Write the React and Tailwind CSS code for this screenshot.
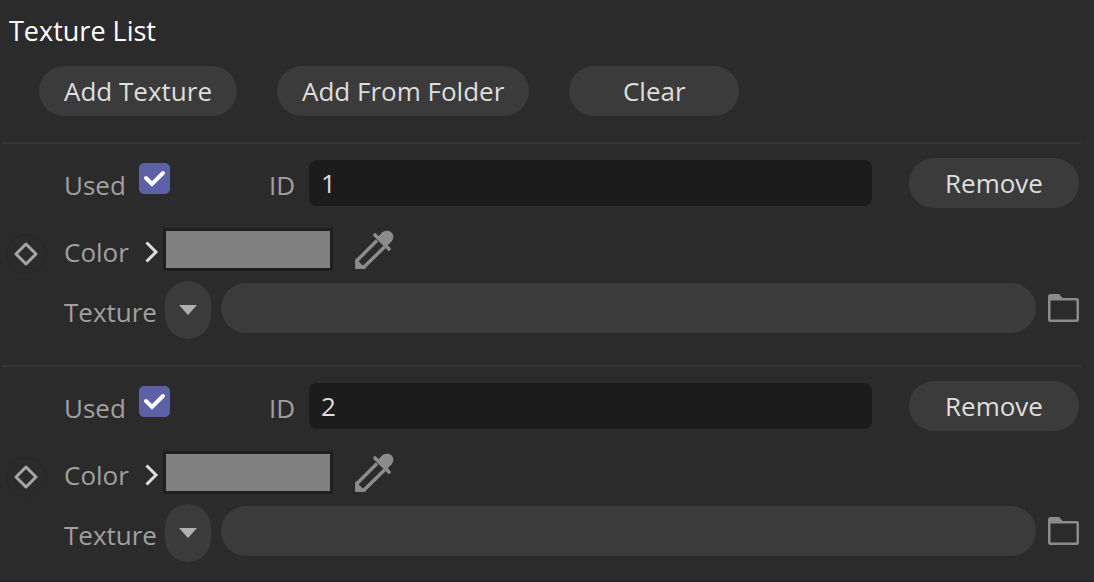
import { useState } from 'react';

const pill = 'h-[50px] min-w-[170px] shrink-0 rounded-full bg-[#3b3b3b] px-[25px] text-[#dedede] hover:bg-[#454545]';

function Eyedropper() {
    return (
        <svg width="40" height="40" viewBox="0 0 40 40" fill="none">
            <path d="M23 10.500 L3 30.500 V37 H10 L30.500 17" stroke="#8c8c8c" strokeWidth="3.400" />
            <path d="M1.300 28 L12 38.700 H1.300 Z" fill="#8c8c8c" />
            <path d="M21 5 L35 19" stroke="#8c8c8c" strokeWidth="3.600" strokeLinecap="round" />
            <path d="M23 8 L27.500 3 C30.500 0 35 0 37.500 2.500 C40 5 40 9 37 12 L32 17 Z" fill="#8c8c8c" />
        </svg>
    )
}

function Folder() {
    return (
        <svg width="31" height="28" viewBox="0 0 31 28" fill="none">
            <path d="M0 6 V2.500 Q0 0 2.500 0 H11 L15 4.500 V6 Z" fill="#8c8c8c" />
            <rect x="1.250" y="5.250" width="28.500" height="21.500" rx="1" stroke="#8c8c8c" strokeWidth="2.500" />
        </svg>
    )
}

function TextureItem({ item, onChange, onRemove }) {
    const { key, used, id, path } = item;

    return (
        <section className="border-t-2 border-[#363636] pt-[14px] pr-[2px] pb-[26px] last:pb-0">
            {/* Used / ID */}
            <div className="flex h-[50px] items-center pl-[61px]">
                <label htmlFor={`used-${key}`} className="w-[75px] shrink-0 pt-1 text-[#a0a0a0]">Used</label>
                <span className="mb-[10px] grid size-[31px] shrink-0">
                    <input
                        id={`used-${key}`}
                        type="checkbox"
                        checked={used}
                        onChange={(e) => onChange({ ...item, used: e.target.checked })}
                        className="peer col-start-1 row-start-1 size-[31px] appearance-none rounded-[5px] bg-[#1c1c1c] checked:bg-[#5d60a6]"
                    />
                    <svg className="pointer-events-none invisible col-start-1 row-start-1 peer-checked:visible" width="31" height="31" viewBox="0 0 31 31" fill="none">
                        <path d="M7 15 L13 21 L24 10" stroke="#fff" strokeWidth="4" strokeLinecap="round" />
                    </svg>
                </span>
                <label htmlFor={`id-${key}`} className="ml-[99px] w-[40px] shrink-0 pt-1 text-[#a0a0a0]">ID</label>
                <input
                    id={`id-${key}`}
                    type="text"
                    value={id}
                    onChange={(e) => onChange({ ...item, id: e.target.value })}
                    className="h-[46px] min-w-0 flex-1 rounded-lg bg-[#1c1c1c] px-3 text-[#dedede] outline-none"
                />
                <button type="button" onClick={onRemove} className={`ml-[37px] ${pill}`}>Remove</button>
            </div>

            {/* Color */}
            <div className="mt-5 flex h-[43px] items-center pl-[3px]">
                <button type="button" aria-label="Keyframe" className="mt-2 grid size-10 shrink-0 place-items-center rounded-full border border-[#272727]">
                    <svg width="24" height="24" viewBox="0 0 24 24" fill="none">
                        <path d="M12 2 L22 12 L12 22 L2 12 Z" stroke="#a6a6a6" strokeWidth="3" strokeLinejoin="round" />
                    </svg>
                </button>
                <span className="ml-[18px] w-[81px] shrink-0 pt-1 text-[#a0a0a0]">Color</span>
                <button type="button" aria-label="Expand color" className="mt-1 shrink-0">
                    <svg width="14" height="22" viewBox="0 0 14 22" fill="none">
                        <path d="M1.500 1.500 L11 11 L1.500 20.500" stroke="#dedede" strokeWidth="3" />
                    </svg>
                </button>
                <button type="button" aria-label="Pick color" className="ml-1 h-[43px] w-[170px] shrink-0 border-3 border-[#1f1f1f] bg-[#808080]"></button>
                <button type="button" aria-label="Eyedropper" className="ml-[21px] shrink-0">
                    <Eyedropper />
                </button>
            </div>

            {/* Texture path */}
            <div className="mt-[10px] flex h-[58px] items-center pl-[61px]">
                <label htmlFor={`path-${key}`} className="w-[101px] shrink-0 pt-1 text-[#a0a0a0]">Texture</label>
                <button type="button" aria-label="Texture options" className="grid h-[58px] w-[46px] shrink-0 place-items-center rounded-full bg-[#3b3b3b]">
                    <svg width="18" height="10" viewBox="0 0 18 10">
                        <path d="M0 0 H18 L9 10 Z" fill="#b0b0b0" />
                    </svg>
                </button>
                <div className="ml-[10px] flex h-[54px] min-w-0 flex-1 items-center gap-3 self-start">
                    <input
                        id={`path-${key}`}
                        type="text"
                        value={path}
                        onChange={(e) => onChange({ ...item, path: e.target.value })}
                        className="h-[50px] min-w-0 flex-1 rounded-full bg-[#3b3b3b] px-6 text-[#dedede] outline-none"
                    />
                    <button type="button" aria-label="Browse" className="shrink-0">
                        <Folder />
                    </button>
                </div>
            </div>
        </section>
    )
}

export default function App() {

    const [items, setItems] = useState([
        { key: 1, used: true, id: '1', path: '' },
        { key: 2, used: true, id: '2', path: '' },
    ]);

    const handleAdd = () => {
        const key = items.reduce((max, it) => Math.max(max, it.key), 0) + 1;
        setItems([...items, { key, used: true, id: String(key), path: '' }]);
    }

    const handleChange = (next) => {
        setItems(items.map((it) => (it.key === next.key ? next : it)));
    }

    const handleRemove = (key) => {
        setItems(items.filter((it) => it.key !== key));
    }

    return (
        <main className="min-h-screen border-b-2 border-[#2a2228] bg-[#2b2b2b] pt-[11px] pr-[13px] pl-[3px] font-['Open_Sans',sans-serif] text-[26px] leading-[40px]">
            <h1 className="pl-[6px] text-[27px] text-white">Texture List</h1>
            <div className="mt-[15px] mb-[26px] flex gap-10 pl-9">
                <button type="button" onClick={handleAdd} className={pill}>Add Texture</button>
                <button type="button" onClick={handleAdd} className={pill}>Add From Folder</button>
                <button type="button" onClick={() => setItems([])} className={pill}>Clear</button>
            </div>
            <div>
                {items.map((item) => (
                    <TextureItem key={item.key} item={item} onChange={handleChange} onRemove={() => handleRemove(item.key)} />
                ))}
            </div>
        </main>
    )
}
